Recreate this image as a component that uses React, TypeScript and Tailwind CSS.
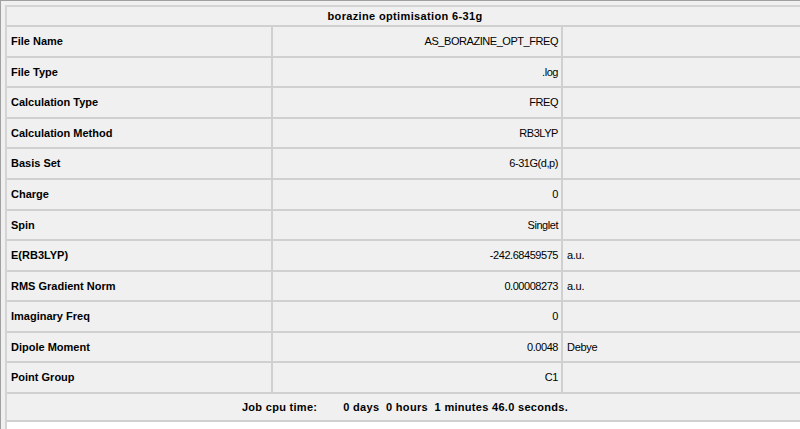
import type { ReactNode } from 'react';

type Row = { label: string; value: string; unit?: string };

const rows: Row[] = [
  { label: 'File Name', value: 'AS_BORAZINE_OPT_FREQ' },
  { label: 'File Type', value: '.log' },
  { label: 'Calculation Type', value: 'FREQ' },
  { label: 'Calculation Method', value: 'RB3LYP' },
  { label: 'Basis Set', value: '6-31G(d,p)' },
  { label: 'Charge', value: '0' },
  { label: 'Spin', value: 'Singlet' },
  { label: 'E(RB3LYP)', value: '-242.68459575', unit: 'a.u.' },
  { label: 'RMS Gradient Norm', value: '0.00008273', unit: 'a.u.' },
  { label: 'Imaginary Freq', value: '0' },
  { label: 'Dipole Moment', value: '0.0048', unit: 'Debye' },
  { label: 'Point Group', value: 'C1' },
];

function Cell({ children, className }: { children?: ReactNode; className: string }) {
  return <div className={`flex items-center ${className}`}>{children}</div>;
}

export default function App() {
  return (
    <div className="h-[429px] w-[800px] overflow-hidden border-l border-t border-[#a0a0a0] bg-[#f0f0f0] pl-1 pt-1 font-['Liberation_Sans',Arial,sans-serif] text-[11px] text-black">
      <div className="flex h-full w-[798px] flex-col border-l-2 border-t-2 border-[#d4d4d4] bg-white">
        <div className="flex h-[20px] shrink-0 items-center justify-center border-b-2 border-[#d0d0d0] bg-[#f0f0f0] font-bold tracking-[0.35px]">
          borazine optimisation 6-31g
        </div>
        <div className="grid h-[367px] shrink-0 grid-cols-[266px_290px_1fr] grid-rows-12 bg-[#f0f0f0]">
          {rows.map((r) => (
            <div key={r.label} className="contents">
              <Cell className="border-b-2 border-r-2 border-[#d0d0d0] pl-1 font-bold">{r.label}</Cell>
              <Cell className="justify-end border-b-2 border-r-2 border-[#d0d0d0] pr-[3px] tracking-[-0.45px]">
                {r.value}
              </Cell>
              <Cell className="border-b-2 border-[#d0d0d0] pl-[4px] tracking-[-0.3px]">{r.unit}</Cell>
            </div>
          ))}
        </div>
        <div className="flex h-[28px] shrink-0 items-center justify-center whitespace-pre border-b-2 border-[#d0d0d0] bg-[#f0f0f0] font-bold tracking-[0.3px]">
          <span>Job cpu time:</span>
          <span className="ml-[26px]">0 days  0 hours  1 minutes 46.0 seconds.</span>
        </div>
        <div className="flex-1 bg-white" />
      </div>
    </div>
  );
}
